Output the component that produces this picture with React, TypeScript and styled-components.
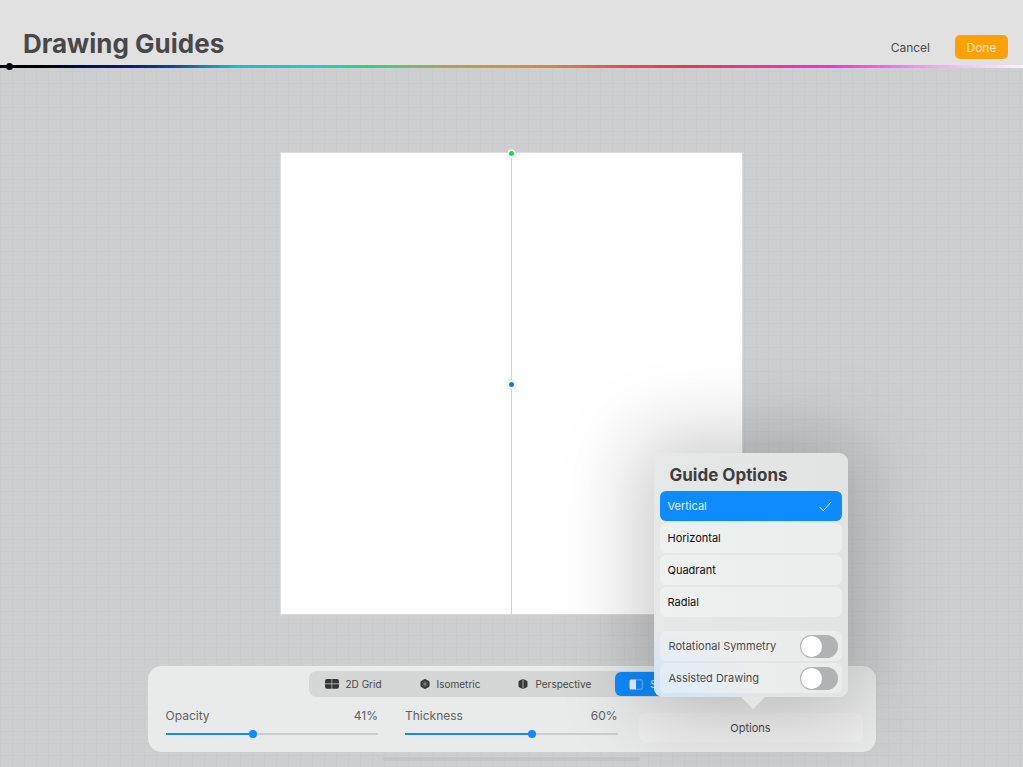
import React, { useState } from "react";
import styled, { createGlobalStyle } from "styled-components";

const BLUE = "#0d8bff";

const GlobalStyle = createGlobalStyle`
  *, *::before, *::after { box-sizing: border-box; }
  body {
    margin: 0;
    font-family: Inter, "Liberation Sans", sans-serif;
    color: #4a4a4a;
    background: #cecfd1;
  }
  button, input { font: inherit; color: inherit; }
  button { border: 0; background: none; padding: 0; cursor: pointer; }
`;

const Page = styled.div`
  display: flex;
  flex-direction: column;
  min-height: 100vh;
  overflow: hidden;
`;

const Header = styled.header`
  display: flex;
  align-items: flex-end;
  justify-content: space-between;
  height: 65px;
  padding: 0 15px 6px 23px;
  background: #e1e1e1;
`;

const Title = styled.h1`
  margin: 0;
  font-size: 26px;
  line-height: 30px;
  font-weight: 700;
  color: #484848;
`;

const Actions = styled.div`
  display: flex;
  align-items: flex-end;
  gap: 25px;
`;

const CancelButton = styled.button`
  font-size: 12px;
  line-height: 22px;
`;

const DoneButton = styled.button`
  width: 53px;
  height: 24px;
  border-radius: 5px;
  background: #ffa007;
  color: #f5e6c8;
  font-size: 12px;
`;

const HueBar = styled.div`
  position: relative;
  height: 3px;
  background: linear-gradient(
    to right,
    #000 0%, #000 4%, #04104a 8%, #06207a 13%, #0b4a90 17%, #1a86b4 20%,
    #1bbccb 23%, #1dcfc4 31%, #30cf80 36%, #74bd6c 40%, #b3a055 44%,
    #d2914a 50%, #de7a48 55%, #e24f4a 61%, #e23a50 67%, #e93590 73%,
    #f42ee6 81%, #f65cf5 86%, #f9a0fa 91%, #fbcffb 96%, #fbf4fb 100%
  );
`;

const HueHandle = styled.span`
  position: absolute;
  left: 6px;
  top: -2px;
  width: 7px;
  height: 7px;
  border-radius: 50%;
  background: #05050f;
`;

const Workspace = styled.main`
  flex: 1;
  display: flex;
  flex-direction: column;
  align-items: center;
  justify-content: space-between;
  padding-top: 85px;
  background-color: #cecfd1;
  background-image:
    linear-gradient(to right, #cacbcd 1px, transparent 1px),
    linear-gradient(to bottom, #cacbcd 1px, transparent 1px);
  background-size: 12px 12px;
  background-position: 0 3px;
`;

const Artboard = styled.div`
  position: relative;
  width: min(461px, 80%);
  aspect-ratio: 1;
  background: linear-gradient(#d2d3d4, #d2d3d4) center / 1px 100% no-repeat #fff;
  box-shadow: 0 0 0 1px rgba(255, 255, 255, 0.3);
`;

const Handle = styled.button<{ $color: string; $top: string }>`
  position: absolute;
  left: 50%;
  top: ${(p) => p.$top};
  width: 9px;
  height: 9px;
  margin: -4px 0 0 -5px;
  border: 2px solid #f7f8f8;
  border-radius: 50%;
  background: ${(p) => p.$color};
  box-shadow: 0 0 1px rgba(0, 0, 0, 0.25);
`;

const Bottom = styled.div`
  display: flex;
  flex-direction: column;
  align-items: center;
  gap: 5px;
  width: 100%;
  padding: 32px 16px 6px;
`;

const Panel = styled.section`
  width: 100%;
  max-width: 728px;
  padding: 5px 0 10px;
  border-radius: 14px;
  background: #e9eaea;
`;

const HomeIndicator = styled.div`
  width: 257px;
  height: 4px;
  border-radius: 2px;
  background: #c4c5c7;
`;

const Tabs = styled.nav`
  display: flex;
  gap: 10px;
  width: 406px;
  height: 26px;
  margin: 0 auto;
  padding: 1px 2px;
  border-radius: 8px;
  background: #d5d6d6;
`;

const Tab = styled.button<{ $active?: boolean }>`
  display: flex;
  align-items: center;
  gap: 7px;
  padding: 0 14px;
  border-radius: 6px;
  font-size: 10px;
  background: ${(p) => (p.$active ? BLUE : "transparent")};
  color: ${(p) => (p.$active ? "#e9f3ff" : "#484848")};
`;

const Controls = styled.div`
  display: grid;
  grid-template-columns: 1fr 1fr 218px;
  column-gap: 27px;
  margin-top: 11px;
  padding: 0 13px 0 18px;
`;

const Field = styled.div`
  display: grid;
  grid-template-columns: 1fr auto;
  align-content: start;
  row-gap: 6px;
  font-size: 12px;
  line-height: 16px;
  color: #616161;
`;

const Range = styled.input<{ $fill: number }>`
  grid-column: 1 / -1;
  appearance: none;
  width: 100%;
  height: 8px;
  margin: 0;
  background: linear-gradient(
      to right,
      ${BLUE} ${(p) => p.$fill}%,
      #cbcccc ${(p) => p.$fill}%
    )
    center / 100% 2px no-repeat;
  &::-webkit-slider-thumb {
    appearance: none;
    width: 8px;
    height: 8px;
    border-radius: 50%;
    background: ${BLUE};
  }
`;

const OptionsAnchor = styled.div`
  position: relative;
  margin-left: -6px;
  padding-top: 5px;
`;

const OptionsButton = styled.button`
  width: 100%;
  height: 29px;
  border-radius: 7px;
  background: rgba(255, 255, 255, 0.22);
  font-size: 11px;
`;

const Popover = styled.div`
  position: absolute;
  left: 50%;
  bottom: 45px;
  width: 194px;
  margin-left: -97px;
  padding: 0 6px 4px;
  border-radius: 9px;
  background: linear-gradient(90deg, #e6e8e8, #e2e3e3);
  box-shadow: 0 0 80px 16px rgba(0, 0, 0, 0.21);
  &::before {
    content: "";
    position: absolute;
    inset: 0;
    border-radius: 9px;
    background: radial-gradient(
      ellipse 100px 70px at 10px 100%,
      #d3e4f6 20%,
      rgba(211, 228, 246, 0) 100%
    );
  }
  &::after {
    content: "";
    position: absolute;
    left: 87px;
    top: 100%;
    border: 12px solid transparent;
    border-top-color: #e4e5e5;
    border-bottom: 0;
  }
`;

const PopoverTitle = styled.h2`
  position: relative;
  margin: 0;
  padding: 11px 10px 5px;
  font-size: 17px;
  line-height: 22px;
  font-weight: 700;
  color: #3e3e3e;
`;

const List = styled.div`
  position: relative;
  display: flex;
  flex-direction: column;
  gap: 2px;
  & + & { margin-top: 14px; }
`;

const Choice = styled.button<{ $active: boolean }>`
  display: flex;
  align-items: center;
  justify-content: space-between;
  height: 30px;
  padding: 0 10px 0 8px;
  border-radius: 6px;
  font-size: 11px;
  text-align: left;
  background: ${(p) => (p.$active ? BLUE : "rgba(255, 255, 255, 0.35)")};
  color: ${(p) => (p.$active ? "#eaf4ff" : "#0c0c0c")};
`;

const SwitchRow = styled.label`
  display: flex;
  align-items: center;
  justify-content: space-between;
  height: 30px;
  padding: 0 4px 0 9px;
  border-radius: 6px;
  font-size: 11px;
  color: #4c4c4c;
  background: rgba(255, 255, 255, 0.3);
`;

const Switch = styled.input`
  appearance: none;
  width: 38px;
  height: 23px;
  margin: 0;
  border-radius: 12px;
  background: #b1b2b4;
  &::before {
    content: "";
    display: block;
    width: 21px;
    height: 21px;
    margin: 1px;
    border-radius: 50%;
    background: #fff;
  }
  &:checked { background: ${BLUE}; }
  &:checked::before { margin-left: 16px; }
`;

const GridIcon = () => (
  <svg width="14" height="10" viewBox="0 0 14 10" fill="#363636">
    <path d="M2 0h4.600v4.600H0V2a2 2 0 0 1 2-2ZM7.200 0H12a2 2 0 0 1 2 2v2.600H7.200ZM0 5.200h6.600V9.800H2a2 2 0 0 1-2-2ZM7.200 5.200H14v2.600a2 2 0 0 1-2 2H7.200Z" />
  </svg>
);

const IsoIcon = () => (
  <svg width="10" height="10" viewBox="0 0 10 10">
    <path d="M5 .3 9.100 2.600v4.800L5 9.700.9 7.400V2.600Z" fill="#363636" stroke="#363636" strokeWidth=".8" strokeLinejoin="round" />
    <path d="M5 2v6M2.400 3.500l5.200 3M7.600 3.500l-5.200 3" stroke="#a5a6a6" strokeWidth=".6" />
  </svg>
);

const PerspectiveIcon = () => (
  <svg width="10" height="10" viewBox="0 0 10 10">
    <path d="M4.600 0v10L1.200 8.200a1.200 1.200 0 0 1-.7-1.100V2.900c0-.5.2-.9.7-1.100ZM5.400 0v10l3.400-1.800c.5-.2.7-.6.7-1.100V2.900c0-.5-.2-.9-.7-1.100Z" fill="#363636" />
    <path d="M5 0v10" stroke="#6b6b6b" strokeWidth=".8" />
  </svg>
);

const SymmetryIcon = () => (
  <svg width="14" height="11" viewBox="0 0 14 11">
    <path d="M2 .5h5v10H2A1.500 1.500 0 0 1 .5 9V2A1.500 1.500 0 0 1 2 .5Z" fill="#eef4fb" />
    <path d="M7 .8h5A1.300 1.300 0 0 1 13.300 2v7a1.300 1.300 0 0 1-1.300 1.200H7" fill="none" stroke="#a9d3ff" strokeWidth=".7" />
  </svg>
);

const CheckIcon = () => (
  <svg width="13" height="11" viewBox="0 0 13 11" fill="none" stroke="#eaf4ff" strokeWidth="1">
    <path d="M.6 6 4.300 9.800 12.300.8" />
  </svg>
);

const MODES = [
  { name: "2D Grid", Icon: GridIcon },
  { name: "Isometric", Icon: IsoIcon },
  { name: "Perspective", Icon: PerspectiveIcon },
  { name: "Symmetry", Icon: SymmetryIcon },
];

const AXES = ["Vertical", "Horizontal", "Quadrant", "Radial"];

function SliderField({ id, label, initial }: { id: string; label: string; initial: number }) {
  const [value, setValue] = useState(initial);
  return (
    <Field>
      <label htmlFor={id}>{label}</label>
      <output htmlFor={id}>{value}%</output>
      <Range
        id={id}
        type="range"
        min={0}
        max={100}
        value={value}
        $fill={value}
        onChange={(e) => setValue(Number(e.target.value))}
      />
    </Field>
  );
}

export default function App() {
  const [mode, setMode] = useState("Symmetry");
  const [axis, setAxis] = useState("Vertical");
  const [open, setOpen] = useState(true);

  return (
    <Page>
      <GlobalStyle />
      <Header>
        <Title>Drawing Guides</Title>
        <Actions>
          <CancelButton>Cancel</CancelButton>
          <DoneButton>Done</DoneButton>
        </Actions>
      </Header>
      <HueBar>
        <HueHandle />
      </HueBar>
      <Workspace>
        <Artboard>
          <Handle $color="#22d84f" $top="0%" aria-label="Rotate guide" />
          <Handle $color="#1478e0" $top="50%" aria-label="Move guide" />
        </Artboard>
        <Bottom>
          <Panel>
            <Tabs>
              {MODES.map(({ name, Icon }) => (
                <Tab key={name} $active={name === mode} onClick={() => setMode(name)}>
                  <Icon />
                  {name}
                </Tab>
              ))}
            </Tabs>
            <Controls>
              <SliderField id="opacity" label="Opacity" initial={41} />
              <SliderField id="thickness" label="Thickness" initial={60} />
              <OptionsAnchor>
                <OptionsButton onClick={() => setOpen(!open)}>Options</OptionsButton>
                {open && (
                  <Popover>
                    <PopoverTitle>Guide Options</PopoverTitle>
                    <List>
                      {AXES.map((name) => (
                        <Choice key={name} $active={name === axis} onClick={() => setAxis(name)}>
                          {name}
                          {name === axis && <CheckIcon />}
                        </Choice>
                      ))}
                    </List>
                    <List>
                      <SwitchRow>
                        Rotational Symmetry
                        <Switch type="checkbox" role="switch" />
                      </SwitchRow>
                      <SwitchRow>
                        Assisted Drawing
                        <Switch type="checkbox" role="switch" />
                      </SwitchRow>
                    </List>
                  </Popover>
                )}
              </OptionsAnchor>
            </Controls>
          </Panel>
          <HomeIndicator />
        </Bottom>
      </Workspace>
    </Page>
  );
}
